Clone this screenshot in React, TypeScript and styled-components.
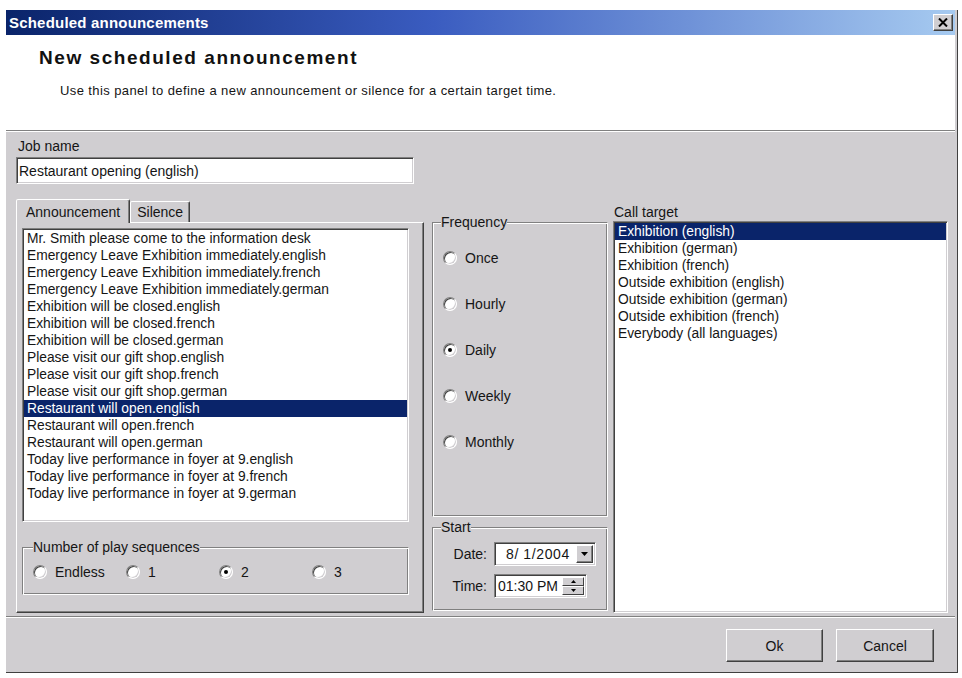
import React from 'react';
import styled, { createGlobalStyle } from 'styled-components';

const FACE = '#d0ced1';
const SHADOW = '#808080';
const DARK = '#404040';
const HILITE = '#0a246a';
const INK = '#151515';

const GlobalStyle = createGlobalStyle`
  html, body { margin: 0; padding: 0; background: #fff; }
  body { font-family: "Liberation Sans", Arial, sans-serif; color: ${INK}; }
  * { box-sizing: border-box; }
`;

const Page = styled.div`
  padding: 10px 0 0 6px;
`;

const Window = styled.div`
  width: 952px;
  height: 663px;
  display: flex;
  flex-direction: column;
  background: ${FACE};
  padding-right: 2px;
  border-right: 1px solid ${DARK};
  border-bottom: 1px solid ${DARK};
`;

const TitleBar = styled.div`
  height: 25px;
  flex: none;
  display: flex;
  align-items: center;
  justify-content: space-between;
  padding: 0 2px 0 3px;
  background: linear-gradient(90deg, #0a246a 0%, #3a5cc0 45%, #a6caf0 100%);
`;

const TitleText = styled.span`
  color: #fff;
  font-weight: bold;
  font-size: 15px;
  letter-spacing: 0.2px;
`;

const CloseButton = styled.button`
  width: 20px;
  height: 17px;
  padding: 0;
  display: flex;
  align-items: center;
  justify-content: center;
  background: ${FACE};
  border: 1px solid;
  border-color: #fff ${DARK} ${DARK} #fff;
  box-shadow: inset -1px -1px 0 ${SHADOW};
`;

const Header = styled.div`
  height: 96px;
  flex: none;
  background: #fff;
  padding: 12px 0 0 33px;
  border-bottom: 1px solid ${SHADOW};
  box-shadow: 0 1px 0 #fff;
`;

const HeaderTitle = styled.div`
  font-size: 19px;
  line-height: 22px;
  font-weight: bold;
  letter-spacing: 1.55px;
  color: #111;
`;

const HeaderText = styled.div`
  margin: 14px 0 0 21px;
  font-size: 13px;
  line-height: 16px;
  letter-spacing: 0.4px;
`;

const Body = styled.div`
  height: 484px;
  flex: none;
  margin-top: 1px;
  padding: 6px 7px 2px 10px;
`;

const FieldLabel = styled.div`
  font-size: 14px;
  line-height: 16px;
  padding-left: 2px;
`;

const TextInput = styled.div`
  margin-top: 3px;
  width: 398px;
  height: 27px;
  display: flex;
  align-items: center;
  padding-left: 2px;
  font-size: 14px;
  background: #fff;
  border: 1px solid;
  border-color: ${SHADOW} #fff #fff ${SHADOW};
  box-shadow: inset 1px 1px 0 ${DARK}, inset -1px -1px 0 ${FACE};
`;

const Columns = styled.div`
  margin-top: 15px;
  height: 414px;
  display: flex;
`;

const LeftColumn = styled.div`
  width: 408px;
  flex: none;
  display: flex;
  flex-direction: column;
`;

const TabStrip = styled.div`
  height: 23px;
  display: flex;
  align-items: flex-end;
  position: relative;
  z-index: 1;
`;

const Tab = styled.div<{ $active?: boolean; $pad: number }>`
  height: ${(p) => (p.$active ? 24 : 21)}px;
  margin-bottom: ${(p) => (p.$active ? -1 : 0)}px;
  padding: 0 ${(p) => p.$pad}px;
  display: flex;
  align-items: center;
  font-size: 14px;
  background: ${FACE};
  border: 1px solid;
  border-bottom: none;
  border-color: #fff ${DARK} transparent #fff;
  box-shadow: inset -1px 0 0 ${SHADOW};
  border-radius: 2px 2px 0 0;
`;

const TabPanel = styled.div`
  flex: 1;
  padding: 5px 0 0 5px;
  border: 1px solid;
  border-color: #fff ${DARK} ${DARK} #fff;
  box-shadow: inset -1px -1px 0 ${SHADOW};
`;

const ListBox = styled.div<{ $w: number; $h: number }>`
  width: ${(p) => p.$w}px;
  height: ${(p) => p.$h}px;
  background: #fff;
  border: 1px solid;
  border-color: ${SHADOW} #fff #fff ${SHADOW};
  box-shadow: inset 1px 1px 0 ${DARK}, inset -1px -1px 0 ${FACE};
  padding: 1px;
  overflow: hidden;
`;

const ListRow = styled.div<{ $selected?: boolean }>`
  height: 17px;
  line-height: 17px;
  padding-left: 3px;
  font-size: 13.8px;
  white-space: nowrap;
  background: ${(p) => (p.$selected ? HILITE : 'transparent')};
  color: ${(p) => (p.$selected ? '#fff' : INK)};
`;

const GroupBox = styled.fieldset<{ $pad: string }>`
  margin: 0;
  padding: ${(p) => p.$pad};
  min-width: 0;
  border: 1px solid;
  border-color: ${SHADOW} #fff #fff ${SHADOW};
  box-shadow: inset 1px 1px 0 #fff, inset -1px -1px 0 ${SHADOW};
`;

const Legend = styled.legend<{ $shift: number }>`
  padding: 0;
  margin-left: ${(p) => p.$shift}px;
  font-size: 14px;
  line-height: 16px;
  background: ${FACE};
`;

const PlayGroup = styled(GroupBox)`
  width: 387px;
  margin-top: 17px;
`;

const SequenceRow = styled.div`
  display: grid;
  grid-template-columns: repeat(4, 93px);
  height: 17px;
`;

const RadioLabel = styled.label<{ $h?: number }>`
  display: flex;
  align-items: center;
  gap: 8px;
  height: ${(p) => p.$h ?? 17}px;
  font-size: 14px;
`;

const RadioCircle = styled.span<{ $checked?: boolean }>`
  position: relative;
  flex: none;
  width: 14px;
  height: 14px;
  border-radius: 50%;
  background: #fff;
  border: 1px solid;
  border-color: ${SHADOW} #fff #fff ${SHADOW};
  box-shadow: inset 1px 1px 0 ${DARK}, inset -1px -1px 0 ${FACE};
  &::after {
    content: '';
    display: ${(p) => (p.$checked ? 'block' : 'none')};
    position: absolute;
    left: 50%;
    top: 50%;
    width: 4px;
    height: 4px;
    margin: -2px 0 0 -2px;
    border-radius: 50%;
    background: #000;
  }
`;

const MiddleColumn = styled.div`
  width: 185px;
  flex: none;
  margin-left: 3px;
  padding: 15px 4px 0 5px;
  display: flex;
  flex-direction: column;
`;

const FrequencyGroup = styled(GroupBox)``;

const StartGroup = styled(GroupBox)`
  margin-top: 2px;
`;

const StartGrid = styled.div`
  display: grid;
  grid-template-columns: 54px auto;
  column-gap: 7px;
  row-gap: 8px;
  align-items: center;
`;

const StartLabel = styled.span`
  font-size: 14px;
  text-align: right;
`;

const SpinField = styled.div<{ $w: number }>`
  width: ${(p) => p.$w}px;
  height: 24px;
  display: flex;
  align-items: stretch;
  background: #fff;
  font-size: 14px;
  border: 1px solid;
  border-color: ${SHADOW} #fff #fff ${SHADOW};
  box-shadow: inset 1px 1px 0 ${DARK}, inset -1px -1px 0 ${FACE};
  padding: 2px;
`;

const FieldValue = styled.span<{ $indent: number }>`
  flex: 1;
  display: flex;
  align-items: center;
  padding-left: ${(p) => p.$indent}px;
  letter-spacing: ${(p) => (p.$indent > 4 ? 0.6 : 0)}px;
  white-space: nowrap;
`;

const DropButton = styled.span`
  width: 17px;
  flex: none;
  display: flex;
  align-items: center;
  justify-content: center;
  background: ${FACE};
  border: 1px solid;
  border-color: #fff ${DARK} ${DARK} #fff;
  box-shadow: inset -1px -1px 0 ${SHADOW};
`;

const Spinner = styled.span`
  width: 22px;
  flex: none;
  display: flex;
  flex-direction: column;
  background: ${FACE};
`;

const SpinHalf = styled.span`
  flex: 1;
  display: flex;
  align-items: center;
  justify-content: center;
  border: 1px solid;
  border-color: #fff ${DARK} ${DARK} #fff;
`;

const RightColumn = styled.div`
  flex: 1;
  margin-left: 1px;
  padding-top: 5px;
  display: flex;
  flex-direction: column;
`;

const TargetLabel = styled(FieldLabel)`
  margin-bottom: 1px;
  padding-left: 1px;
`;

const Footer = styled.div`
  flex: 1;
  display: flex;
  justify-content: flex-end;
  gap: 13px;
  padding: 12px 21px 0 0;
  border-top: 1px solid ${SHADOW};
  box-shadow: inset 0 1px 0 #fff;
`;

const PushButton = styled.button<{ $w: number }>`
  width: ${(p) => p.$w}px;
  height: 33px;
  padding: 0;
  font-family: "Liberation Sans", Arial, sans-serif;
  font-size: 14px;
  color: ${INK};
  background: ${FACE};
  border: 1px solid;
  border-color: #fff ${DARK} ${DARK} #fff;
  box-shadow: inset -1px -1px 0 ${SHADOW};
`;

const announcements = [
  'Mr. Smith please come to the information desk',
  'Emergency Leave Exhibition immediately.english',
  'Emergency Leave Exhibition immediately.french',
  'Emergency Leave Exhibition immediately.german',
  'Exhibition will be closed.english',
  'Exhibition will be closed.french',
  'Exhibition will be closed.german',
  'Please visit our gift shop.english',
  'Please visit our gift shop.french',
  'Please visit our gift shop.german',
  'Restaurant will open.english',
  'Restaurant will open.french',
  'Restaurant will open.german',
  'Today live performance in foyer at 9.english',
  'Today live performance in foyer at 9.french',
  'Today live performance in foyer at 9.german',
];

const targets = [
  'Exhibition (english)',
  'Exhibition (german)',
  'Exhibition (french)',
  'Outside exhibition (english)',
  'Outside exhibition (german)',
  'Outside exhibition (french)',
  'Everybody (all languages)',
];

const frequencies = ['Once', 'Hourly', 'Daily', 'Weekly', 'Monthly'];
const sequences = ['Endless', '1', '2', '3'];

const Radio = ({ label, checked, h }: { label: string; checked?: boolean; h?: number }) => (
  <RadioLabel $h={h}>
    <RadioCircle $checked={checked} />
    <span>{label}</span>
  </RadioLabel>
);

const DownArrow = () => (
  <svg width="7" height="4" viewBox="0 0 7 4">
    <path d="M0 0h7L3.5 4z" fill="#000" />
  </svg>
);

const SmallArrow = ({ up }: { up?: boolean }) => (
  <svg width="5" height="3" viewBox="0 0 5 3">
    <path d={up ? 'M0 3h5L2.5 0z' : 'M0 0h5L2.5 3z'} fill="#000" />
  </svg>
);

export default function App() {
  return (
    <Page>
      <GlobalStyle />
      <Window>
        <TitleBar>
          <TitleText>Scheduled announcements</TitleText>
          <CloseButton aria-label="Close">
            <svg width="10" height="9" viewBox="0 0 10 9">
              <path d="M1 0.5l8 8M9 0.5l-8 8" stroke="#000" strokeWidth="2" />
            </svg>
          </CloseButton>
        </TitleBar>

        <Header>
          <HeaderTitle>New scheduled announcement</HeaderTitle>
          <HeaderText>
            Use this panel to define a new announcement or silence for a certain target time.
          </HeaderText>
        </Header>

        <Body>
          <FieldLabel>Job name</FieldLabel>
          <TextInput>Restaurant opening (english)</TextInput>

          <Columns>
            <LeftColumn>
              <TabStrip>
                <Tab $active $pad={9}>Announcement</Tab>
                <Tab $pad={6}>Silence</Tab>
              </TabStrip>
              <TabPanel>
                <ListBox $w={387} $h={294}>
                  {announcements.map((a, i) => (
                    <ListRow key={a} $selected={i === 10}>
                      {a}
                    </ListRow>
                  ))}
                </ListBox>
                <PlayGroup $pad="8px 10px 14px 10px">
                  <Legend $shift={0}>Number of play sequences</Legend>
                  <SequenceRow>
                    {sequences.map((s) => (
                      <Radio key={s} label={s} checked={s === '2'} />
                    ))}
                  </SequenceRow>
                </PlayGroup>
              </TabPanel>
            </LeftColumn>

            <MiddleColumn>
              <FrequencyGroup $pad="5px 10px 51px 10px">
                <Legend $shift={-2}>Frequency</Legend>
                {frequencies.map((f) => (
                  <Radio key={f} label={f} checked={f === 'Daily'} h={46} />
                ))}
              </FrequencyGroup>
              <StartGroup $pad="7px 0 12px 0">
                <Legend $shift={8}>Start</Legend>
                <StartGrid>
                  <StartLabel>Date:</StartLabel>
                  <SpinField $w={102}>
                    <FieldValue $indent={9}>8/ 1/2004</FieldValue>
                    <DropButton>
                      <DownArrow />
                    </DropButton>
                  </SpinField>
                  <StartLabel>Time:</StartLabel>
                  <SpinField $w={93}>
                    <FieldValue $indent={1}>01:30 PM</FieldValue>
                    <Spinner>
                      <SpinHalf>
                        <SmallArrow up />
                      </SpinHalf>
                      <SpinHalf>
                        <SmallArrow />
                      </SpinHalf>
                    </Spinner>
                  </SpinField>
                </StartGrid>
              </StartGroup>
            </MiddleColumn>

            <RightColumn>
              <TargetLabel>Call target</TargetLabel>
              <ListBox $w={335} $h={392}>
                {targets.map((t, i) => (
                  <ListRow key={t} $selected={i === 0}>
                    {t}
                  </ListRow>
                ))}
              </ListBox>
            </RightColumn>
          </Columns>
        </Body>

        <Footer>
          <PushButton $w={97}>Ok</PushButton>
          <PushButton $w={98}>Cancel</PushButton>
        </Footer>
      </Window>
    </Page>
  );
}
